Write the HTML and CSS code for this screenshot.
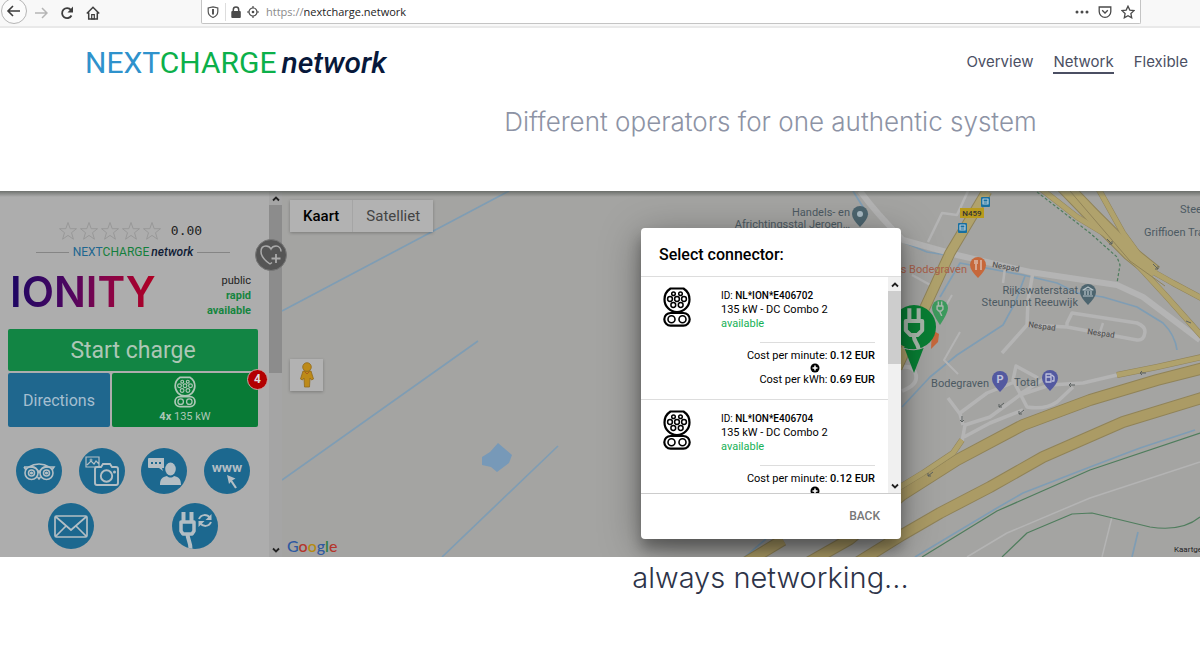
FILE: index.html
```html
<!DOCTYPE html>
<html lang="en">
  <head>
    <meta charset="UTF-8" />
    <meta name="viewport" content="width=device-width, initial-scale=1.0" />
    <title>Nextcharge network</title>
    <link rel="stylesheet" href="styles.css">
  </head>
  <body>
    <!-- shared symbols -->
    <svg class="sprite" aria-hidden="true">
      <symbol id="combo" viewBox="0 0 28 40">
        <g fill="none" stroke="currentColor">
          <path stroke-width="2.2" d="M7.5 1.5h13C24.500 4 26.500 8 26.500 12.500a12.500 12.500 0 0 1-25 0C1.500 8 3.500 4 7.500 1.500z" />
          <rect stroke-width="2.2" x="1.300" y="26" width="25.400" height="12.600" rx="6.300" />
          <circle stroke-width="1.600" cx="8.500" cy="32.300" r="3.500" />
          <circle stroke-width="1.600" cx="19.500" cy="32.300" r="3.500" />
          <g stroke-width="1.500">
            <circle cx="10.500" cy="6.800" r="1.800" />
            <circle cx="17.500" cy="6.800" r="1.800" />
            <circle cx="7" cy="12" r="2.400" />
            <circle cx="14" cy="12" r="2.400" />
            <circle cx="21" cy="12" r="2.400" />
            <circle cx="10.300" cy="18" r="2.400" />
            <circle cx="17.700" cy="18" r="2.400" />
          </g>
        </g>
      </symbol>
      <symbol id="star" viewBox="0 0 20 20">
        <path fill="none" stroke="currentColor" d="M10 1.500l2.200 6.200h6.300l-5 4 1.900 6.500L10 14.400l-5.400 3.800 1.900-6.500-5-4h6.300z" />
      </symbol>
      <symbol id="up" viewBox="0 0 8 8">
        <path fill="none" stroke="currentColor" stroke-width="1.800" d="M1 5.500l3-3 3 3" />
      </symbol>
      <symbol id="down" viewBox="0 0 8 8">
        <path fill="none" stroke="currentColor" stroke-width="1.800" d="M1 2.500l3 3 3-3" />
      </symbol>
      <symbol id="plus" viewBox="0 0 10 10">
        <circle cx="5" cy="5" r="4.500" />
        <path stroke="#fff" stroke-width="1.500" d="M5 2.500v5M2.500 5h5" />
      </symbol>
      <symbol id="plug" viewBox="0 0 24 36">
        <g fill="none" stroke="currentColor" stroke-width="3.500">
          <path d="M8 1v11M16 1v11" />
          <path stroke-linejoin="round" d="M5 12h14v8l-4 4H9l-4-4z" />
          <path d="M12 24c-1 5 3 6 4 12" />
        </g>
      </symbol>
    </svg>

    <div class="browser-bar">
      <button class="tool back" aria-label="Back">
        <svg width="28" height="28" viewBox="0 0 28 28" fill="none"><circle cx="14" cy="12" r="12.500" fill="#fbfbfb" stroke="#b5b5b5" /><path d="M20 12H8.500M13 7l-5 5 5 5" stroke="#3d3d3d" stroke-width="1.600" /></svg>
      </button>
      <button class="tool" aria-label="Forward">
        <svg width="14" height="14" viewBox="0 0 14 14" fill="none" stroke="#b5b5b5" stroke-width="1.500"><path d="M1 7h11.500M8 2l5 5-5 5" /></svg>
      </button>
      <button class="tool" aria-label="Reload">
        <svg width="14" height="14" viewBox="0 0 14 14" fill="none" stroke="#3d3d3d" stroke-width="1.800"><path d="M11.500 9.500A5 5 0 1 1 11 4" /><path fill="#3d3d3d" stroke="none" d="M13 .5v6H7.500z" /></svg>
      </button>
      <button class="tool" aria-label="Home">
        <svg width="14" height="14" viewBox="0 0 14 14" fill="none" stroke="#3d3d3d" stroke-width="1.500"><path d="M.8 7.500L7 1.300l6.200 6.200M2.700 6.500v6.500h8.600V6.500" /><path d="M5.700 13V8.700h2.600V13z" stroke-width="1.200" /></svg>
      </button>
      <div class="url-box">
        <svg width="12" height="12" viewBox="0 0 12 12" fill="none" stroke="#555" stroke-width="1.200"><path d="M6 .8l4.800 1.200v3.500c0 3-2 4.800-4.800 6C3.200 10.300 1.200 8.500 1.200 5.500V2z" /><path d="M6 3v5.500" stroke-width="2" /></svg>
        <span class="divider"></span>
        <svg width="12" height="12" viewBox="0 0 12 12" fill="#4a4a4a"><rect x="1.300" y="5" width="9.500" height="7" rx="1" /><path fill="none" stroke="#4a4a4a" stroke-width="1.500" d="M3.300 5.500V3.700a2.700 2.700 0 0 1 5.400 0v1.800" /></svg>
        <svg width="12" height="12" viewBox="0 0 12 12" fill="none" stroke="#4a4a4a" stroke-width="1.200"><circle cx="6" cy="6" r="4" /><circle cx="6" cy="6" r="1.300" fill="#4a4a4a" stroke="none" /><path d="M6 0v2M6 10v2M0 6h2M10 6h2" /></svg>
        <label class="scheme" for="url">https://</label>
        <input class="url" id="url" type="text" value="nextcharge.network">
        <svg width="14" height="12" viewBox="0 0 14 12" fill="#4a4a4a"><circle cx="2" cy="6" r="1.500" /><circle cx="7" cy="6" r="1.500" /><circle cx="12" cy="6" r="1.500" /></svg>
        <svg width="14" height="12" viewBox="0 0 14 12" fill="none" stroke="#4a4a4a" stroke-width="1.300"><path d="M1.200 1h11.600v4.500a5.800 5.800 0 0 1-11.600 0z" /><path d="M4.200 4.300L7 7l2.800-2.700" /></svg>
        <svg width="14" height="14" viewBox="0 0 14 14" fill="none" stroke="#4a4a4a" stroke-width="1.300"><path d="M7 1.200l1.800 3.900 4.200.5-3.100 2.900.8 4.300L7 10.700l-3.700 2.100.8-4.300L1 5.600l4.200-.5z" /></svg>
      </div>
    </div>

    <header class="site-header">
      <a href="#" class="brand"><span class="next">NEXT</span><span class="charge">CHARGE</span><em>network</em></a>
      <nav class="menu">
        <a href="#">Overview</a>
        <a href="#" class="active">Network</a>
        <a href="#">Flexible</a>
      </nav>
    </header>

    <h2 class="subtitle">Different operators for one authentic system</h2>

    <main class="stage">
      <aside class="station">
        <div class="panel">
          <div class="rating">
            <svg width="20" height="20"><use href="#star" /></svg>
            <svg width="20" height="20"><use href="#star" /></svg>
            <svg width="20" height="20"><use href="#star" /></svg>
            <svg width="20" height="20"><use href="#star" /></svg>
            <svg width="20" height="20"><use href="#star" /></svg>
            <span>0.00</span>
          </div>
          <div class="network-line">
            <div class="brand small"><span class="next">NEXT</span><span class="charge">CHARGE</span><em>network</em></div>
          </div>
          <div class="operator">
            <div class="ionity">IONITY</div>
            <div class="status">public<br><b>rapid</b><br><b>available</b></div>
          </div>
          <div class="actions">
            <button class="start">Start charge</button>
            <button class="directions">Directions</button>
            <button class="sockets">
              <svg width="22" height="32"><use href="#combo" /></svg>
              <span><b>4x</b> 135 kW</span>
              <span class="badge">4</span>
            </button>
          </div>
          <div class="links">
            <button aria-label="Tripadvisor">
              <svg width="46" height="46" viewBox="0 0 46 46" fill="none" stroke="currentColor" stroke-width="1.600"><circle cx="15.500" cy="25" r="6.500" /><circle cx="30.500" cy="25" r="6.500" /><circle cx="15.500" cy="25" r="3" /><circle cx="30.500" cy="25" r="3" /><circle cx="15.500" cy="25" r=".8" /><circle cx="30.500" cy="25" r=".8" /><path d="M8 19h5c6-4 14-4 20 0h5l-2 3M8 19l2 3M13 19c5 0 9 2 10 6 1-4 5-6 10-6M21.500 29l1.500 2 1.500-2" /></svg>
            </button>
            <button aria-label="Photos">
              <svg width="46" height="46" viewBox="0 0 46 46" fill="none" stroke="currentColor" stroke-width="1.600"><path stroke-width="1.200" d="M7 9h13v10H7zM8 17l4-4 3 3 2-3 3 3" /><circle cx="12" cy="12" r="1" stroke-width="1" /><path stroke-width="1.900" d="M18 19h4l2-3h7l2 3h4a2 2 0 0 1 2 2v14a2 2 0 0 1-2 2H18a2 2 0 0 1-2-2V21a2 2 0 0 1 2-2z" /><circle cx="27.500" cy="28" r="5.700" stroke-width="1.900" /><circle cx="35.500" cy="24" r=".7" /></svg>
            </button>
            <button aria-label="Comments">
              <svg width="46" height="46" viewBox="0 0 46 46" fill="currentColor"><path d="M8 10h15v10h-2l1 3-4-3H8a1 1 0 0 1-1-1v-8a1 1 0 0 1 1-1z" /><path fill="#1c688f" d="M10 14h2v2h-2zM14 14h2v2h-2zM18 14h2v2h-2z" /><ellipse cx="29.500" cy="21" rx="5.300" ry="6.500" /><path d="M19 37c0-6 2-8 7-9 2 2 5 2 7 0 5 1 7 3 7 9z" /></svg>
            </button>
            <button aria-label="Website" class="www">
              <span>www</span>
              <svg width="12" height="14" viewBox="0 0 12 14" fill="none" stroke="currentColor" stroke-width="2.200"><path d="M10 13L4 4" /><path fill="currentColor" stroke="none" d="M1 0l8.500 3.500L6 5.500 3 9z" /></svg>
            </button>
            <button aria-label="Mail" class="half">
              <svg width="46" height="46" viewBox="0 0 46 46" fill="none" stroke="currentColor" stroke-width="1.700"><rect x="7" y="13" width="32" height="21" rx="1.500" /><path d="M7.500 13.500L23 27l15.500-13.500M7.500 33.500L18 23M38.500 33.500L28 23" /></svg>
            </button>
            <button aria-label="Update charger" class="half">
              <svg width="46" height="46" viewBox="0 0 46 46" fill="none" stroke="currentColor"><path stroke-width="4" d="M11.500 9v10M19.500 9v10" /><path stroke-width="3.500" stroke-linejoin="round" d="M9 19h13v9l-2 3h-9l-2-3z" /><path stroke-width="4" d="M15.500 31c0 5 3 8 3 15" /><path stroke-width="2" d="M27 16c2-5 8-5 11-1M39 19c-2 5-8 5-11 1" /><path fill="currentColor" stroke="none" d="M39.500 11v6h-6zM26.500 24v-6h6z" /></svg>
            </button>
          </div>
        </div>
        <div class="scrollbar">
          <svg width="8" height="8"><use href="#up" /></svg>
          <span class="thumb"></span>
          <svg width="8" height="8"><use href="#down" /></svg>
        </div>
        <button class="favorite" aria-label="Add to favorites">
          <svg width="24" height="24" viewBox="0 0 24 24" fill="none" stroke="currentColor" stroke-width="1.500"><path d="M11 21C5 17 2 13 2 8.500 2 5 4 3 7 3c2 0 4 1 5 3 1-2 3-3 5-3 3 0 5 2.500 5 5.500M11 21l2-1.500" /><path stroke-width="1.800" d="M17 11v9M12.500 15.500h9" /></svg>
        </button>
      </aside>

      <section class="map">
        <svg class="tiles" viewBox="282 191 918 366" preserveAspectRatio="xMinYMin slice" fill="none" stroke-linejoin="round">
          <!-- water -->
          <g stroke="#7f9db4" stroke-width="1.700">
            <path d="M282 311L509 191M282 480L478 341M442 557L558 446M745 557L766 539" />
            <path d="M853 191l15 24M903 242l24 10 33 5M902 407l28-30 27-22 46-30 12-22 10-27M940 297l20-34 63 12 34 8 20 10 26 4 34 10 26 16q12 12 14 27" />
            <path d="M915 557l82-49 26-15 67-26 50-19 55-18M1138 532l-6 25" />
          </g>
          <path fill="#7799b8" d="M482 457l8-5 8-9 14 12-3 8-12 9-6-5-9-2z" />
          <!-- small roads -->
          <g stroke="#b4b4b4" stroke-width="3.500">
            <path d="M968 191l-11 24-15-2-14 29M912 275l22 12M1005 268l-2 15M1103 323l-4 12" stroke-width="2.500" />
            <path d="M1033 272l-5 28-1 25-25 28M1027 325l40 2 0-4 5-10 65 10q8 3 8 9-1 9-8 8l-70-13" />
            <path d="M952 295l-8 14M960 332l-16 28 14 14" stroke-width="2" />
            <path d="M1117 375l-34 8-33 2-30 10-30 22-25 8-3 17M1073 387l-16 15q-12 8-30 5l-14-27 3-14 22 12M1023 410l-33 13-26 14M948 398l12 16 3 11M960 413l27-20 30-12M1020 394l30-19" />
            <path d="M967 557l40-24 83-35 110-36M1112 517l-10 40" stroke-width="1.500" />
            <path d="M902 367q12-2 14 8t-14 16" stroke-width="4" />
            <path d="M860 191q16 22 43 49l54 15 73 17 87 13 26 12 57 43" stroke-width="6" />
          </g>
          <!-- motorways -->
          <g stroke="#908358" stroke-width="12">
            <path d="M730 572l53-32M790 573l60-34 52-44 55-35 66-35 67-25 67-20 47-12M852 566l50-31 38-22 50-26 53-30 80-35 82-25" />
          </g>
          <g stroke="#ab9b65" stroke-width="10">
            <path d="M730 572l53-32M790 573l60-34 52-44 55-35 66-35 67-25 67-20 47-12M852 566l50-31 38-22 50-26 53-30 80-35 82-25" />
          </g>
          <g stroke="#908358" stroke-width="9">
            <path d="M987 191l-37 62-23 50-30 65" stroke-width="11" />
            <path d="M1040 188l37 29 33 20 23 23 34 37 40 45M1098 188l25 45 27 37 23 13 30 16M1117 375l40-8 45-10M962 440l-9 13-30 20-23 14" stroke-width="6" />
            <path d="M1062 184l30 31 38 38 25 20" stroke-width="16" />
          </g>
          <g stroke="#b0a26c">
            <path d="M987 191l-37 62-23 50-30 65" stroke-width="9" />
            <path d="M1040 188l37 29 33 20 23 23 34 37 40 45M1098 188l25 45 27 37 23 13 30 16M1117 375l40-8 45-10M962 440l-9 13-30 20-23 14" stroke-width="5" />
            <path d="M1062 184l30 31 38 38 25 20" stroke-width="14" />
          </g>
          <path stroke="#908358" stroke-width="1" d="M1070 191l60 70 35 25" />
          <!-- green paths -->
          <g stroke="#4f7d5d" stroke-width="1.200">
            <path stroke-dasharray="3 2" d="M1037 192l26 20 27 21 27 24 3 8-3 18" />
            <path d="M922 557l75-46 93-41 110-37M1002 557l25-24 45-19 20-1 58 14q32 5 50-10" />
          </g>
          <g stroke="#5b6160" stroke-width="1">
            <path d="M1107 239l5 5m0-3v3h-3M1153 264l5 5m0-3v3h-3M1186 321l5 2M1146 373h-6l2-2m-2 2l2 2M1075 385h-6l2-2m-2 2l2 2M1004 403l-5 4v-3m0 3h3M1024 410l-5 4v-3m0 3h3M962 416v6l-2-2m2 2l2-2M933 472l-5 4v-3m0 3h3" />
          </g>

          <rect x="960" y="208" width="24" height="10" fill="#b89a1d" />
          <text x="972" y="216" text-anchor="middle" class="shield">N459</text>
          <g fill="#176fa0"><rect x="981" y="197" width="9" height="10" rx="1" /><rect x="958" y="223" width="9" height="10" rx="1" /></g>
          <g stroke="#b5cbd8" stroke-width="1.200"><path d="M983 199h5v5h-5zM983 202h5M960 225h5v5h-5zM960 228h5" /></g>

          <g class="poi">
            <text x="850" y="216" text-anchor="end">Handels- en</text>
            <text x="850" y="228" text-anchor="end">Africhtingsstal Jeroen…</text>
            <text x="967" y="273" text-anchor="end" class="food">s Bodegraven</text>
            <text x="1078" y="294" text-anchor="end">Rijkswaterstaat</text>
            <text x="1078" y="306" text-anchor="end">Steunpunt Reeuwijk</text>
            <text x="989" y="387" text-anchor="end">Bodegraven</text>
            <text x="1014" y="386">Total</text>
            <text x="1180" y="213">Steenhandel</text>
            <text x="1144" y="236">Griffioen Transport</text>
          </g>
          <g class="road">
            <text transform="translate(992 267) rotate(10)">Nespad</text>
            <text transform="translate(1028 327) rotate(8)">Nespad</text>
            <text transform="translate(1087 334) rotate(8)">Nespad</text>
          </g>

          <!-- pins -->
          <g>
            <path fill="#4d656f" d="M852 214a8 8 0 1 1 16 0q0 5-8 13-8-8-8-13z" /><circle cx="860" cy="214" r="3" fill="#a9bac4" />
            <path fill="#c6683b" d="M970 265a8 8 0 1 1 16 0q0 5-8 13-8-8-8-13z" /><path stroke="#e0c7ba" stroke-width="1.300" d="M975 260v4m2-4v4m-1 0v6M981 260v10" />
            <path fill="#4d656f" d="M1080 292a8 8 0 1 1 16 0q0 5-8 13-8-8-8-13z" /><path stroke="#b6c2c7" stroke-width="1.200" d="M1083 290l5-3 5 3zM1085 291v4m3-4v4m3-4v4M1083 296h10" />
            <path fill="#5359a0" d="M992 379a8 8 0 1 1 16 0q0 5-8 13-8-8-8-13z" /><text x="1000" y="383" text-anchor="middle" class="parking">P</text>
            <path fill="#5359a0" d="M1042 378a8 8 0 1 1 16 0q0 5-8 13-8-8-8-13z" /><path stroke="#c0c2dc" stroke-width="1.300" d="M1046 374h5v8h-5zM1046 377h5M1052 375l2 2v4h-2" />
            <path fill="#3d9a5d" d="M932 308a8 8 0 1 1 16 0q0 5-8 17-8-12-8-17z" />
            <path fill="#c6683b" d="M932 330l7 4-1 8-7 7z" />
            <path fill="#087f34" d="M904 347h20l-10 26z" />
            <circle cx="914" cy="327" r="22" fill="#087f34" />
            <path fill="none" stroke="#adadad" stroke-width="1" d="M903 348q11 4 22-1" />
          </g>
          <use href="#plug" x="935" y="301" width="10" height="15" class="pin-plug" />
          <use href="#plug" x="900" y="307" width="28" height="42" class="pin-plug" />
        </svg>

        <div class="map-type">
          <button class="on">Kaart</button>
          <button>Satelliet</button>
        </div>
        <button class="pegman" aria-label="Street View">
          <svg width="14" height="26" viewBox="0 0 14 26" fill="#bd8a18" stroke="#916a1c" stroke-width=".8"><path d="M3 9h8l2.500 8-2 1-1.500-2-.5 9H4.500L4 16l-1.500 2-2-1z" /><circle cx="7" cy="5" r="4.300" /><path stroke="#a44f1d" fill="none" d="M4.500 9.500L7 12l2.500-2.500" /></svg>
        </button>
        <a href="#" class="google"><i class="b">G</i><i class="r">o</i><i class="y">o</i><i class="b">g</i><i class="g">l</i><i class="r">e</i></a>
        <span class="copyright">Kaartgegevens</span>
      </section>

      <div class="dialog" role="dialog" aria-labelledby="dialog-title">
        <h3 id="dialog-title">Select connector:</h3>
        <div class="dialog-body">
          <div class="connectors">
            <div class="connector">
              <svg width="28" height="40"><use href="#combo" /></svg>
              <div class="info">
                <small>ID: <b>NL*ION*E406702</b></small>
                <span>135 kW - DC Combo 2</span>
                <span class="free">available</span>
              </div>
              <div class="cost">
                <span>Cost per minute: <b>0.12 EUR</b></span>
                <svg width="10" height="10"><use href="#plus" /></svg>
                <span>Cost per kWh: <b>0.69 EUR</b></span>
              </div>
            </div>
            <div class="connector">
              <svg width="28" height="40"><use href="#combo" /></svg>
              <div class="info">
                <small>ID: <b>NL*ION*E406704</b></small>
                <span>135 kW - DC Combo 2</span>
                <span class="free">available</span>
              </div>
              <div class="cost">
                <span>Cost per minute: <b>0.12 EUR</b></span>
                <svg width="10" height="10"><use href="#plus" /></svg>
              </div>
            </div>
          </div>
          <div class="scrollbar light">
            <svg width="8" height="8"><use href="#up" /></svg>
            <span class="thumb"></span>
            <svg width="8" height="8"><use href="#down" /></svg>
          </div>
        </div>
        <div class="dialog-footer">
          <button>BACK</button>
        </div>
      </div>
    </main>

    <h1 class="tagline">always networking...</h1>
  </body>
</html>
```
FILE: styles.css
```css
* {
  box-sizing: border-box;
  margin: 0;
  padding: 0;
}

body {
  background: #fff;
  font-family: Roboto, "Liberation Sans", sans-serif;
  overflow-x: hidden;
}

button {
  background: none;
  border: none;
  font-family: inherit;
  cursor: pointer;
}

a {
  text-decoration: none;
}

svg {
  display: block;
  flex-shrink: 0;
}

.sprite {
  position: absolute;
  width: 0;
  height: 0;
}

/* browser toolbar */
.browser-bar {
  display: flex;
  align-items: center;
  gap: 12px;
  height: 28px;
  padding-right: 59px;
  background: #f8f8f8;
  border-bottom: 2px solid #e9e9e9;
}

.tool {
  height: 24px;
  display: flex;
  align-items: center;
}

.tool.back {
  height: 28px;
  margin-right: -6px;
}

.url-box {
  flex: 1;
  display: flex;
  align-items: center;
  align-self: flex-start;
  gap: 9px;
  height: 24px;
  margin-left: 89px;
  padding: 0 5px;
  background: #fff;
  border: 1px solid #c4c4c4;
  border-top: none;
  border-radius: 0 0 2px 2px;
}

.divider {
  width: 1px;
  height: 18px;
  background: #ddd;
  margin: 0 -5px 0 -3px;
}

.url-box svg:nth-of-type(2) {
  margin-right: -4px;
}

.scheme,
.url {
  font: 11px/16px "Open Sans", sans-serif;
  color: #8a8a8a;
}

.scheme {
  margin: 0 -9px 0 -2px;
}

.url {
  flex: 1;
  min-width: 0;
  border: none;
  outline: none;
  color: #222;
}

/* header */
.site-header {
  display: flex;
  justify-content: space-between;
  align-items: center;
  height: 70px;
  padding: 0 12px 0 85px;
}

.brand {
  font-size: 30px;
  line-height: 36px;
  color: #07183a;
  white-space: nowrap;
}

.brand .next {
  color: #2f92cc;
}

.brand .charge {
  color: #0cb04a;
}

.brand em {
  font-weight: 500;
  margin-left: 5px;
}

.menu {
  display: flex;
  gap: 20px;
}

.menu a {
  font: 15px/20px Inter, sans-serif;
  color: #4b4f63;
  border-bottom: 2px solid transparent;
}

.menu a.active {
  border-color: #4b4f63;
}

.subtitle,
.tagline {
  padding-left: 341px;
  text-align: center;
  font-family: Inter, sans-serif;
}

.subtitle {
  font-weight: 300;
  font-size: 26px;
  line-height: 48px;
  height: 93px;
  color: #8d93a5;
}

.tagline {
  font-weight: 300;
  font-size: 29px;
  line-height: 41px;
  color: #2d3348;
}

/* stage */
.stage {
  position: relative;
  display: flex;
  overflow: hidden;
  background: #a4a4a2;
}

.stage::after {
  content: "";
  position: absolute;
  inset: 0 0 auto;
  height: 6px;
  background: linear-gradient(rgba(70, 75, 70, 0.6), transparent);
}

.station {
  position: relative;
  display: flex;
  width: 282px;
  background: #adadad;
}

.panel {
  flex: 1;
  padding: 30px 11px 8px 8px;
}

.rating {
  display: flex;
  justify-content: center;
  gap: 1px;
  padding-right: 6px;
  color: #989898;
}

.rating span {
  font: 13px/20px "DejaVu Sans Mono", monospace;
  color: #222;
  margin-left: 8px;
}

.network-line {
  display: flex;
  align-items: center;
  gap: 4px;
  padding: 3px 28px 0;
}

.network-line::before,
.network-line::after {
  content: "";
  flex: 1;
  height: 1px;
  background: #858585;
}

.brand.small {
  font-size: 12px;
  line-height: 16px;
  color: #101c35;
}

.brand.small .next {
  color: #206690;
}

.brand.small .charge {
  color: #137f3c;
}

.brand.small em {
  margin-left: 2px;
}

.operator {
  display: flex;
  justify-content: space-between;
  align-items: flex-start;
  height: 69px;
  padding: 13px 7px 0 2px;
}

.ionity {
  font: 600 42px/38px Inter, sans-serif;
  background: linear-gradient(90deg, #1d0763, #4c0660 40%, #86044a 65%, #b10022);
  -webkit-background-clip: text;
  background-clip: text;
  color: transparent;
}

.status {
  font-size: 11px;
  line-height: 15px;
  text-align: right;
  color: #222;
}

.status b {
  color: #15853f;
}

.actions {
  display: grid;
  grid-template-columns: 102px 1fr;
  gap: 2px;
}

.actions button {
  border-radius: 2px;
  color: #adc7b6;
}

.actions .start {
  grid-column: span 2;
  height: 42px;
  font-size: 23px;
  background: #128544;
}

.actions .directions {
  height: 54px;
  font-size: 16px;
  color: #a5bfd0;
  background: #1f678e;
}

.actions .sockets {
  position: relative;
  display: flex;
  flex-direction: column;
  align-items: center;
  justify-content: center;
  gap: 2px;
  font-size: 11px;
  line-height: 14px;
  background: #087b36;
}

.badge {
  position: absolute;
  top: -4px;
  right: -10px;
  width: 21px;
  height: 21px;
  border: 1px solid #c9a5a5;
  border-radius: 50%;
  background: #b30000;
  color: #ddd;
  font-size: 12px;
  font-weight: 700;
  line-height: 19px;
}

.links {
  display: flex;
  flex-wrap: wrap;
  justify-content: space-between;
  gap: 9px 6px;
  padding: 21px 8px 0;
}

.links button {
  width: 46px;
  height: 46px;
  border-radius: 50%;
  background: #1c688f;
  color: #b3bec4;
  overflow: hidden;
}

.links .half {
  margin: 0 32px;
}

.links .www {
  display: flex;
  flex-direction: column;
  align-items: center;
  justify-content: center;
  padding-top: 8px;
  font: 700 12px/14px Inter, sans-serif;
}

.links .www svg {
  margin-left: 10px;
}

.scrollbar {
  display: flex;
  flex-direction: column;
  align-items: center;
  width: 13px;
  padding: 4px 0 3px;
  background: #a5a5a5;
  color: #222;
}

.scrollbar .thumb {
  width: 100%;
  height: 168px;
  margin: 2px 0 auto;
  background: #8c8c8c;
}

.favorite {
  position: absolute;
  top: 48px;
  left: 255px;
  width: 32px;
  height: 32px;
  padding: 3px;
  border: 1px solid #777;
  border-radius: 50%;
  background: #555;
  color: #aaa;
  z-index: 1;
}

/* map */
.map {
  position: relative;
  flex: 1;
  min-width: 0;
}

.tiles {
  position: absolute;
  width: 100%;
  height: 100%;
}

.poi {
  font-size: 11px;
  fill: #4c5a62;
}

.poi .food {
  fill: #a8604a;
}

.road {
  font-size: 8px;
  font-weight: 500;
  fill: #555;
}

.shield {
  font-size: 8px;
  font-weight: 500;
  fill: #333;
}

.parking {
  font-size: 11px;
  font-weight: 700;
  fill: #c0c2dc;
}

.pin-plug {
  color: #a9b8ac;
}

.map-type {
  position: absolute;
  top: 9px;
  left: 8px;
  display: flex;
  background: #b2b2b2;
  box-shadow: 0 1px 3px rgba(0, 0, 0, 0.25);
}

.map-type button {
  padding: 0 13px;
  font-size: 15px;
  line-height: 32px;
  color: #444;
}

.map-type .on {
  font-weight: 500;
  color: #000;
  border-right: 1px solid #a5a5a5;
}

.pegman {
  position: absolute;
  top: 168px;
  left: 8px;
  width: 33px;
  height: 32px;
  display: grid;
  place-items: center;
  background: #b2b2b2;
  box-shadow: 0 1px 3px rgba(0, 0, 0, 0.25);
}

.google {
  position: absolute;
  left: 5px;
  bottom: 1px;
  font: 500 16px/20px Lato, sans-serif;
}

.google i {
  font-style: normal;
}

.google .b {
  color: #3059a0;
}

.google .r {
  color: #b4352c;
}

.google .y {
  color: #b58a10;
}

.google .g {
  color: #2b7d43;
}

.copyright {
  position: absolute;
  left: 892px;
  bottom: 0;
  font-size: 8px;
  line-height: 14px;
  color: #222;
}

/* connector dialog */
.dialog {
  position: absolute;
  top: 37px;
  left: 641px;
  width: 260px;
  background: #fff;
  border-radius: 4px;
  box-shadow: 0 10px 14px rgba(0, 0, 0, 0.3), 0 8px 40px rgba(0, 0, 0, 0.35);
}

.dialog h3 {
  padding: 5px 18px 0;
  font-weight: 500;
  font-size: 16px;
  line-height: 43px;
}

.dialog-body {
  display: flex;
  height: 218px;
  border-top: 1px solid #ddd;
  border-bottom: 1px solid #ccc;
  overflow: hidden;
}

.connectors {
  flex: 1;
}

.connector {
  display: grid;
  grid-template-columns: 28px 1fr;
  column-gap: 30px;
  padding: 10px 13px 12px 22px;
  border-bottom: 1px solid #ddd;
}

.info {
  display: flex;
  flex-direction: column;
  padding-top: 2px;
  font-size: 11px;
  line-height: 14px;
}

.info small {
  font-size: 10px;
}

.info b,
.cost b {
  font-weight: 500;
}

.info .free {
  color: #16b155;
}

.cost {
  grid-column: span 2;
  justify-self: end;
  display: flex;
  flex-direction: column;
  align-items: flex-end;
  position: relative;
  margin-top: 11px;
  padding-top: 7px;
  font-size: 11px;
  line-height: 14px;
}

.cost::before {
  content: "";
  position: absolute;
  top: 0;
  right: 0;
  width: 115px;
  height: 1px;
  background: #ddd;
}

.cost svg {
  margin-right: 55px;
}

.scrollbar.light {
  background: #f0f0f0;
}

.scrollbar.light .thumb {
  height: 73px;
  background: #cdcdcd;
}

.dialog-footer {
  display: flex;
  justify-content: flex-end;
  padding: 11px 21px;
}

.dialog-footer button {
  font-weight: 500;
  font-size: 12px;
  line-height: 23px;
  color: #777;
}
```
